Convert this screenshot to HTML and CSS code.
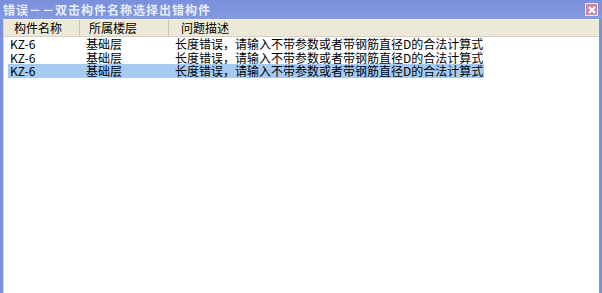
FILE: index.html
```
<!DOCTYPE html>
<html lang="zh-CN">
<head>
  <meta charset="UTF-8">
  <title>错误</title>
  <link rel="stylesheet" href="styles.css">
</head>
<body>
  <div class="win">
    <div class="titlebar">
      <span class="title">错误－－双击构件名称选择出错构件</span>
      <span class="close">
        <svg width="8" height="8" viewBox="0 0 8 8"><path d="M1 1L7 7M7 1L1 7" stroke="#fff" stroke-width="2"/></svg>
      </span>
    </div>
    <div class="frame">
      <div class="list">
        <div class="head">
          <div class="col c1">构件名称</div>
          <div class="col c2">所属楼层</div>
          <div class="col c3">问题描述</div>
        </div>
        <div class="row"><span class="c1">KZ-6</span><span class="c2">基础层</span><span class="c3">长度错误，请输入不带参数或者带钢筋直径D的合法计算式</span></div>
        <div class="row"><span class="c1">KZ-6</span><span class="c2">基础层</span><span class="c3">长度错误，请输入不带参数或者带钢筋直径D的合法计算式</span></div>
        <div class="row sel"><span class="c1">KZ-6</span><span class="c2">基础层</span><span class="c3">长度错误，请输入不带参数或者带钢筋直径D的合法计算式</span></div>
      </div>
    </div>
  </div>
</body>
</html>
```
FILE: styles.css
```
body {margin: 0; font-family: "Noto Sans CJK SC", sans-serif; font-size: 12px; color: #000; overflow: hidden;}
.win {width: 602px; height: 293px; display: flex; flex-direction: column; background: #7b91dd;}
.titlebar {height: 19px; display: flex; align-items: center; justify-content: space-between; padding: 0 4px 0 3px; background: linear-gradient(#7a90dc, #8399e0);}
.title {color: #e8ecf8; font-weight: bold; font-size: 12px; line-height: 19px; letter-spacing: 1px;}
.close {width: 11px; height: 11px; display: flex; align-items: center; justify-content: center; background: #c88ca6; border: 1px solid #f2e6ee;}
.frame {flex: 1; padding: 0 3px; display: flex;}
.list {flex: 1; background: #fff; border-top: 1px solid #f4f2ea; border-left: 1px solid #d8d6cc;}
.head {height: 16px; display: flex; background: #ece9d8; border-bottom: 1px solid #d6d2c2;}
.head .col {line-height: 16px; border-right: 1px solid #c8c5b4; box-sizing: border-box;}
.head .c1 {width: 76px; padding-left: 10px;}
.head .c2 {width: 89px; padding-left: 9px;}
.head .c3 {padding-left: 12px; border-right: none;}
.row {display: flex; height: 13.5px; line-height: 13.5px; margin-left: 4px; width: fit-content; padding-right: 1px;}
.row span {line-height: 13.5px; height: 13.5px;}
.row .c1 {width: 76px; padding-left: 2px;}
.row .c2 {width: 89px;}
.row.sel {background: #a6caf0;}
```
